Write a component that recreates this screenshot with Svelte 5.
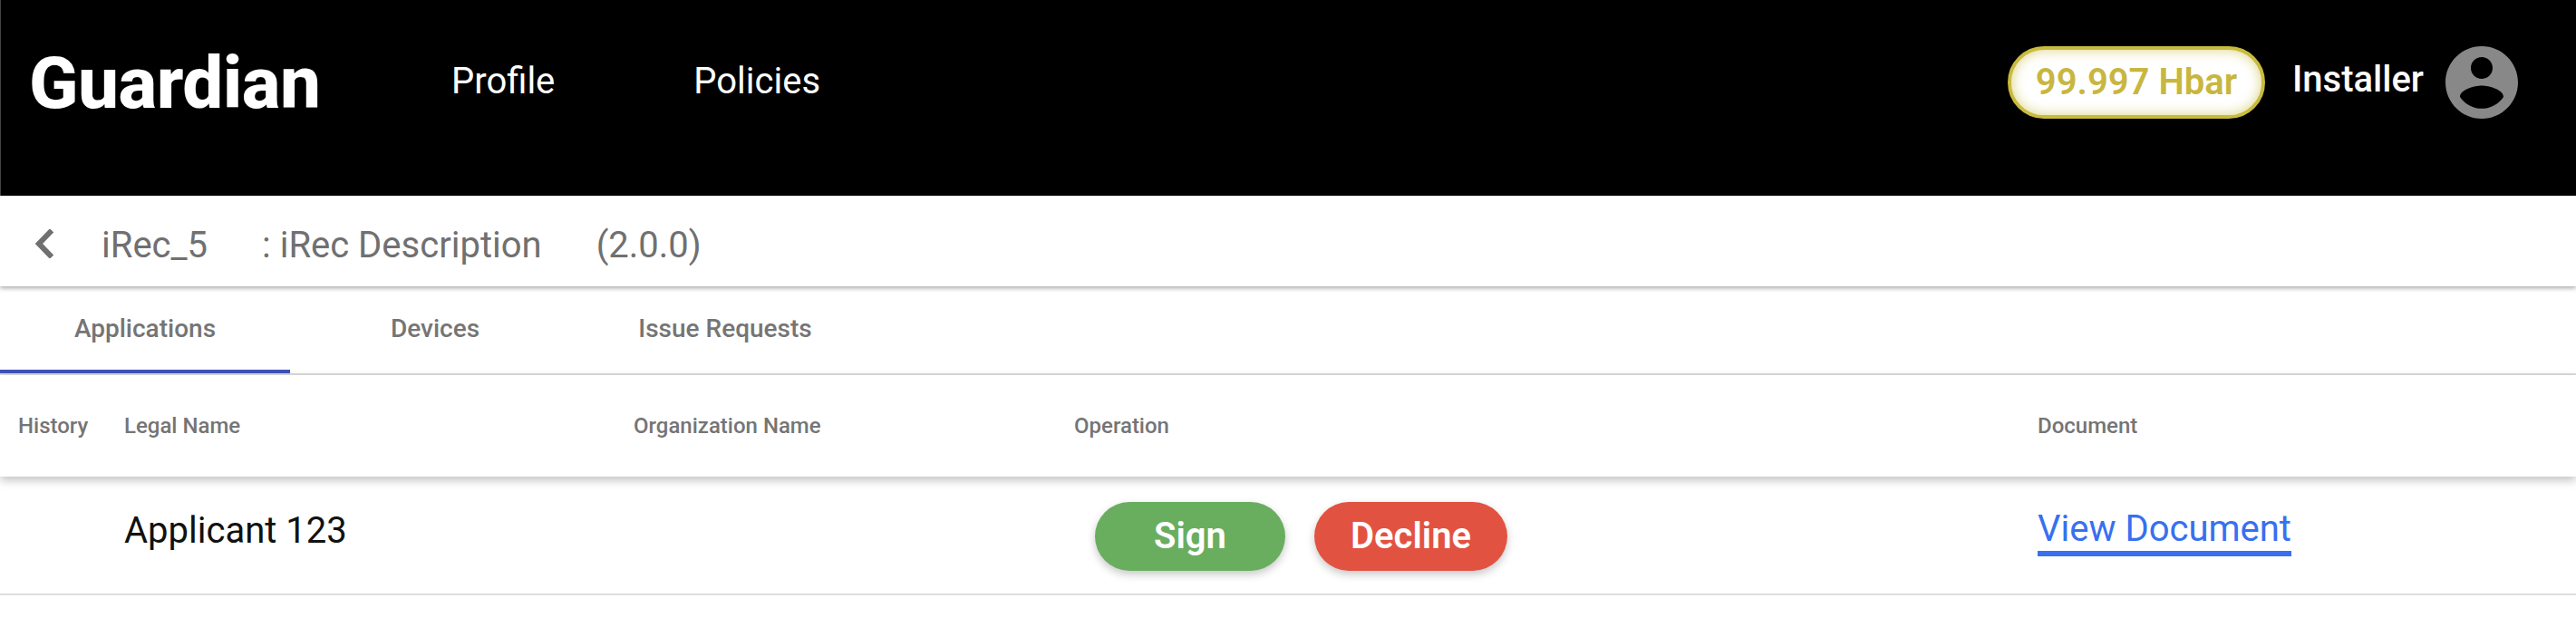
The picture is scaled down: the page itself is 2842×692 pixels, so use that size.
<script>
  const columns = ['History', 'Legal Name', 'Organization Name', 'Operation', 'Document'];
  const tabs = ['Applications', 'Devices', 'Issue Requests'];
  let active = 0;
</script>

<div class="page">
  <header class="toolbar">
    <div class="logo">Guardian</div>
    <nav class="nav">
      <span>Profile</span>
      <span>Policies</span>
    </nav>
    <div class="balance">99.997 Hbar</div>
    <div class="user">Installer</div>
    <svg class="avatar" viewBox="2 2 20 20" aria-hidden="true">
      <path d="M12 2C6.48 2 2 6.48 2 12s4.48 10 10 10 10-4.48 10-10S17.52 2 12 2zm0 3c1.66 0 3 1.34 3 3s-1.34 3-3 3-3-1.34-3-3 1.34-3 3-3zm0 14.2c-2.5 0-4.71-1.28-6-3.22.03-1.99 4-3.08 6-3.08 1.99 0 5.97 1.09 6 3.08-1.29 1.94-3.5 3.22-6 3.22z" />
    </svg>
  </header>

  <div class="policy-bar">
    <svg class="back" viewBox="0 0 20 32" aria-hidden="true">
      <path d="M16 3.500 4 16l12 12.500" />
    </svg>
    <span class="name">iRec_5</span>
    <span class="desc">: iRec Description</span>
    <span class="version">(2.0.0)</span>
  </div>

  <div class="tabs">
    {#each tabs as tab, i}
      <div class="tab" class:active={i === active}>{tab}</div>
    {/each}
  </div>

  <table>
    <thead>
      <tr>
        {#each columns as col}
          <th>{col}</th>
        {/each}
      </tr>
    </thead>
    <tbody>
      <tr>
        <td></td>
        <td class="applicant">Applicant 123</td>
        <td></td>
        <td>
          <div class="ops">
            <button class="btn sign">Sign</button>
            <button class="btn decline">Decline</button>
          </div>
        </td>
        <td><a class="doc" href="#doc">View Document</a></td>
      </tr>
    </tbody>
  </table>
</div>

<style>
  :global(body) {
    margin: 0;
    background: #fff;
  }

  .page {
    width: 2842px;
    height: 692px;
    overflow: hidden;
    font-family: Roboto, 'Liberation Sans', sans-serif;
  }

  .toolbar {
    height: 216px;
    box-sizing: border-box;
    background: #000;
    color: #fff;
    display: flex;
    align-items: flex-start;
    border-left: 1px solid #444;
    padding: 51px 64px 0 31px;
  }

  .logo {
    font-size: 80px;
    font-weight: 800;
    line-height: 80px;
    letter-spacing: -0.5px;
    width: 467px;
    margin-top: 1px;
  }

  .nav {
    display: flex;
    gap: 153px;
    font-size: 40px;
    line-height: 80px;
    margin-top: -1px;
    margin-left: -1px;
    flex: 1;
  }

  .balance {
    box-sizing: border-box;
    width: 284px;
    height: 80px;
    border: 4px solid #c9bb3d;
    border-radius: 40px;
    background: #fff;
    box-shadow: inset 0 0 14px rgba(201, 187, 61, 0.65);
    color: #c8b63f;
    font-size: 40px;
    font-weight: 600;
    line-height: 72px;
    text-align: center;
  }

  .user {
    font-size: 40px;
    font-weight: 500;
    line-height: 80px;
    margin: -3px 24px 0 30px;
  }

  .avatar {
    width: 80px;
    height: 80px;
    fill: #888;
  }

  .policy-bar {
    position: relative;
    height: 100px;
    box-sizing: border-box;
    display: flex;
    align-items: center;
    padding: 8px 0 0 39px;
    color: #707070;
    font-size: 40px;
    background: #fff;
    box-shadow: 0 2px 5px rgba(0, 0, 0, 0.35);
  }

  .back {
    width: 20px;
    height: 32px;
    fill: none;
    stroke: #707070;
    stroke-width: 6;
    stroke-linecap: square;
    margin-right: 53px;
    margin-top: -2px;
  }

  .name {
    margin-right: 60px;
  }

  .desc {
    margin-right: 60px;
  }

  .tabs {
    display: flex;
    height: 98px;
    box-sizing: border-box;
    border-bottom: 2px solid #ddd;
  }

  .tab {
    width: 320px;
    height: 96px;
    box-sizing: border-box;
    padding-top: 29px;
    text-align: center;
    font-size: 28px;
    font-weight: 500;
    line-height: 36px;
    color: #757575;
  }

  .tab.active {
    border-bottom: 4px solid #3f51b5;
  }

  table {
    width: 2842px;
    table-layout: fixed;
    border-collapse: collapse;
  }

  th:nth-child(1) { width: 97px; }
  th:nth-child(2) { width: 542px; }
  th:nth-child(3) { width: 466px; }
  th:nth-child(4) { width: 1043px; }

  thead tr {
    height: 112px;
    box-shadow: 0 4px 10px rgba(0, 0, 0, 0.25);
  }

  th {
    padding: 0 0 0 20px;
    text-align: left;
    font-size: 24px;
    font-weight: 500;
    color: #757575;
  }

  tbody tr {
    height: 130px;
    border-bottom: 2px solid #ddd;
  }

  td {
    padding: 0 0 0 20px;
    font-size: 40px;
    color: #111;
  }

  .applicant {
    padding-bottom: 10px;
  }

  .ops {
    display: flex;
    gap: 32px;
    padding: 2px 0 0 23px;
  }

  .btn {
    height: 76px;
    border: none;
    border-radius: 38px;
    color: #fff;
    font-family: inherit;
    font-size: 40px;
    font-weight: 600;
    box-shadow: 0 4px 10px rgba(0, 0, 0, 0.22);
  }

  .sign {
    width: 210px;
    background: #69ae5f;
  }

  .decline {
    width: 213px;
    background: #e25241;
  }

  .doc {
    display: inline-block;
    color: #3770f0;
    font-size: 40px;
    line-height: 48px;
    text-decoration: none;
    border-bottom: 6px solid #3770f0;
    margin-bottom: 8px;
  }
</style>
